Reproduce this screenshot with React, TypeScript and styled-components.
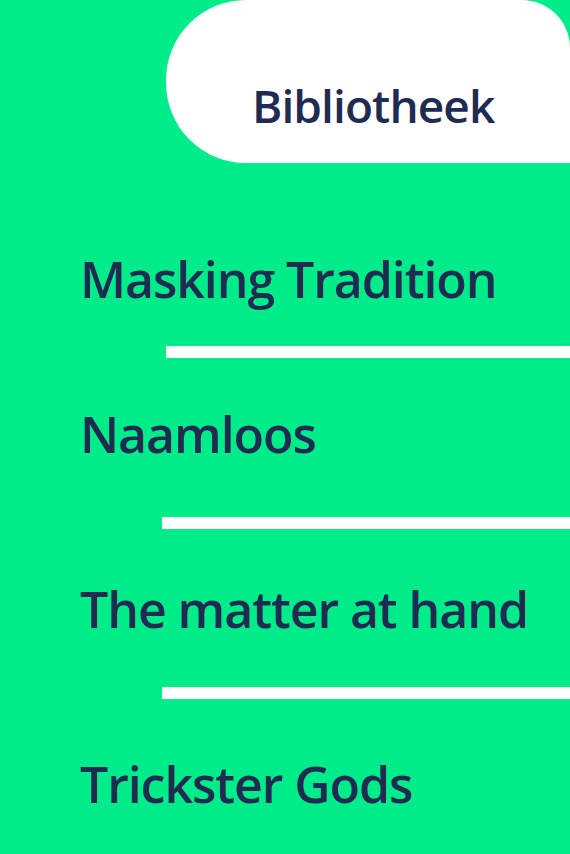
import React from "react";
import styled, { createGlobalStyle } from "styled-components";

const GlobalStyle = createGlobalStyle`
  html, body { margin: 0; padding: 0; }
  body { background: #00eb89; font-family: "Open Sans", "Liberation Sans", sans-serif; }
`;

const Page = styled.div`
  width: 570px;
  min-height: 854px;
  background: #00eb89;
  overflow: hidden;
  display: flex;
  flex-direction: column;
`;

const Header = styled.header`
  display: flex;
  justify-content: flex-end;
`;

const Pill = styled.div`
  width: 404px;
  height: 163px;
  box-sizing: border-box;
  background: #ffffff;
  border-radius: 80px 48px 0 80px;
  padding: 78px 0 0 86px;
`;

const PageTitle = styled.h1`
  margin: 0;
  font-family: "Open Sans", "Liberation Sans", sans-serif;
  font-weight: 600;
  font-size: 46px;
  line-height: 55px;
  letter-spacing: -0.9px;
  color: #1f2b50;
  white-space: nowrap;
  font-variant-ligatures: none;
`;

const List = styled.ul`
  list-style: none;
  margin: 0;
  padding: 0 0 0 80px;
  display: flex;
  flex-direction: column;
`;

const Item = styled.li<{ $above: number }>`
  display: flex;
  flex-direction: column;
  margin-top: ${(p) => p.$above}px;
`;

const ItemTitle = styled.span`
  font-family: "Open Sans", "Liberation Sans", sans-serif;
  font-weight: 600;
  font-size: 50px;
  line-height: 60px;
  letter-spacing: -1.05px;
  color: #1f2b50;
  white-space: nowrap;
  font-variant-ligatures: none;
`;

const Separator = styled.div<{ $below: number; $indent: number }>`
  height: 12px;
  background: #ffffff;
  margin-top: ${(p) => p.$below}px;
  margin-left: ${(p) => p.$indent}px;
  margin-right: -10px;
`;

const items = [
  { title: "Masking Tradition", above: 86, below: 37, indent: 86 },
  { title: "Naamloos", above: 46, below: 53, indent: 82 },
  { title: "The matter at hand", above: 50, below: 48, indent: 82 },
  { title: "Trickster Gods", above: 55, below: null, indent: 0 },
];

export default function App() {
  return (
    <Page>
      <GlobalStyle />
      <Header>
        <Pill>
          <PageTitle>Bibliotheek</PageTitle>
        </Pill>
      </Header>
      <List>
        {items.map((it) => (
          <Item key={it.title} $above={it.above}>
            <ItemTitle>{it.title}</ItemTitle>
            {it.below !== null && <Separator $below={it.below} $indent={it.indent} />}
          </Item>
        ))}
      </List>
    </Page>
  );
}
